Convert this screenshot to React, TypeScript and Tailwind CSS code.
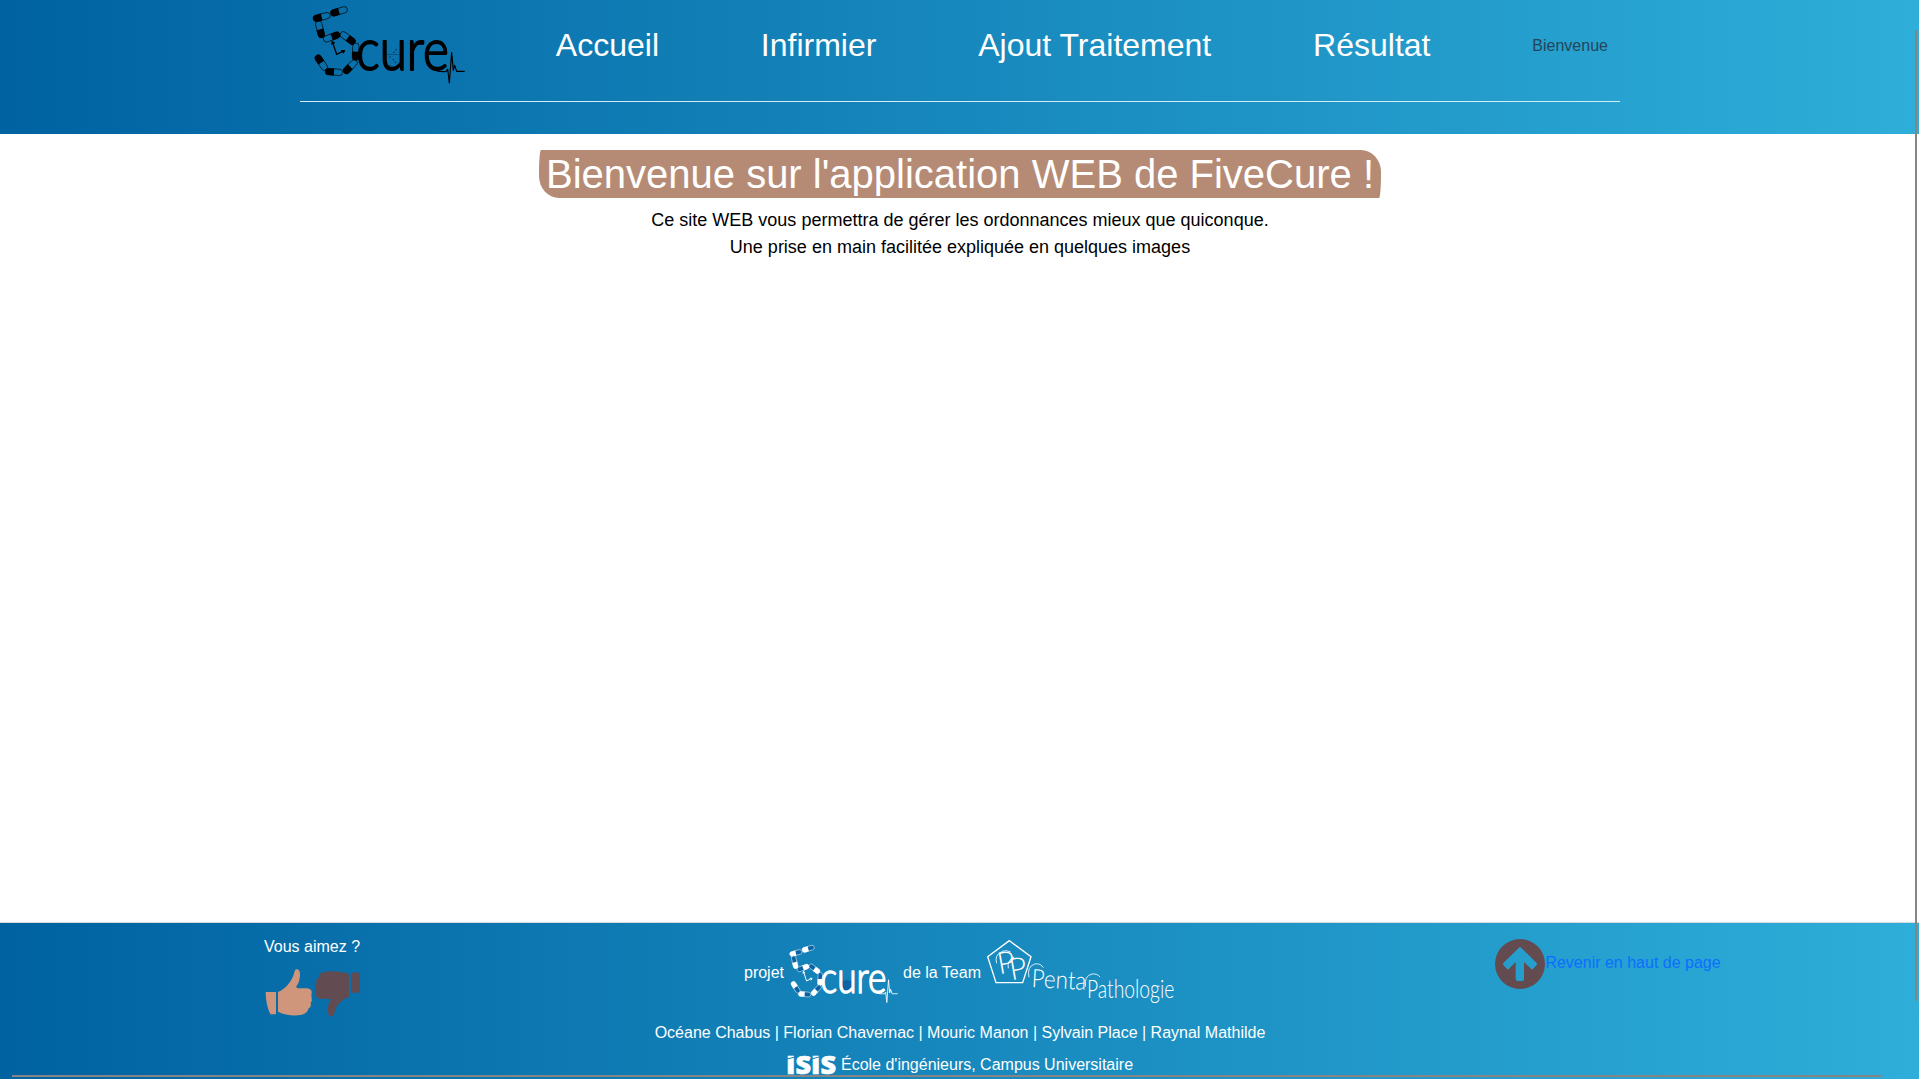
import React from "react";

type Pill = [x: number, y: number, angle: number];

// Each capsule's filled half points along its angle.
const pills: Pill[] = [
  [147, 34, 164],
  [95, 51, 166],
  [90, 88, 76],
  [125, 111, -20],
  [173, 114, 36],
  [197, 155, 92],
  [181, 200, 135],
  [132, 216, 184],
  [94, 188, 236],
];

function CureLogo({ light = false, className }: { light?: boolean; className: string }) {
  const ink = light ? "#ffffff" : "#000000";
  return (
    <svg viewBox="66 15 459 240" preserveAspectRatio="none" overflow="visible" className={className} aria-label="5cure">
      {pills.map(([x, y, a]) => (
        <g key={`${x}-${y}`} transform={`translate(${x} ${y}) rotate(${a})`}>
          <rect x="-26" y="-9.5" width="52" height="19" rx="9.5" fill={light ? "#0b62a5" : "none"} stroke={ink} strokeWidth="2" />
          <path d="M0-10.5H16A10.5 10.5 0 0 1 16 10.5H0Z" fill={ink} />
        </g>
      ))}
      <path d="M127 125L140 163L163 152M125 134L127 125L134 130M153 152L163 152L159 160" fill="none" stroke={ink} strokeWidth="4" />
      {light ? (
        <path d="M290 163Q305 157 334 163Q334 205 311 207Q290 203 290 163Z" fill="#0b62a5" />
      ) : (
        <path d="M291 164H334" stroke={ink} strokeWidth="1.5" opacity=".6" />
      )}
      <g fill={light ? "#0b62a5" : ink} opacity=".55">
        <rect x="298" y="169" width="4" height="4" />
        <rect x="308" y="177" width="4" height="4" />
        <rect x="314" y="185" width="4" height="4" />
        <rect x="310" y="155" width="4" height="4" />
        <rect x="316" y="147" width="4" height="4" />
        <rect x="298" y="195" width="4" height="3" />
      </g>
      <text
        x="199"
        y="210"
        textLength="277"
        lengthAdjust="spacingAndGlyphs"
        fill={ink}
        stroke={ink}
        strokeWidth="6"
        strokeLinejoin="round"
        fontFamily="Lato"
        fontWeight="300"
        fontSize="170"
      >
        cure
      </text>
      <path d="M430 209Q449 217 469 214L473 207L478 249L485 158L490 211L494 196L500 214H524" fill="none" stroke={ink} strokeWidth="3.5" strokeLinejoin="round" />
    </svg>
  );
}

function TeamLogo() {
  return (
    <svg viewBox="288 57 570 210" overflow="visible" className="h-[70px] w-[190px]" aria-label="PentaPathologie">
      <path d="M358 62L423 110L398 188H318L293 110Z" fill="none" stroke="white" strokeWidth="4" />
      <g fill="white" fontFamily="Lato" fontWeight="300">
        <text x="328 364" y="163 181" fontSize="90" rotate="-10">
          PP
        </text>
        <text x="424" y="201" fontSize="76" textLength="164" lengthAdjust="spacingAndGlyphs" transform="rotate(3 424 201)">
          Penta
        </text>
        <text x="591" y="235" fontSize="78" textLength="262" lengthAdjust="spacingAndGlyphs">
          Pathologie
        </text>
      </g>
      <g fill="none" stroke="white" strokeWidth="2.5">
        <path d="M320 130Q312 105 337 94Q350 89 362 96" />
        <path d="M355 145Q350 122 373 111" />
        <path d="M417 172Q410 140 434 132Q452 129 460 143" />
        <path d="M587 200Q581 168 606 162Q622 160 630 171" />
      </g>
    </svg>
  );
}

function Thumbs() {
  return (
    <svg viewBox="75 175 288 147" className="ml-[2px] h-[49px] w-24">
      <g fill="#d0967b">
        <path d="M77 247H108V314H91Q77 284 77 247Z" />
        <path d="M114 247C137 238 158 213 163 187Q165 178 171 178Q181 180 180 197Q179 218 168 232Q171 237 182 236H203Q217 239 215 251Q212 257 215 265Q217 274 212 279Q215 291 206 296Q202 313 181 316Q145 321 114 306Z" />
      </g>
      <g fill="#634b52">
        <path d="M333 189H360V249H333Z" />
        <path d="M327 192V262C307 269 287 286 283 311Q281 321 275 321Q261 317 263 298Q265 278 274 269Q266 267 256 267H238Q224 262 226 248Q231 243 227 234Q223 225 230 219Q225 210 236 204Q237 188 256 186Q290 182 327 192Z" />
      </g>
    </svg>
  );
}

function ArrowUp() {
  return (
    <svg viewBox="0 0 150 150" className="size-[50px]">
      <path
        fill="#634b50"
        fillRule="evenodd"
        d="M75 0A75 75 0 1 1 75 150A75 75 0 1 1 75 0ZM75 23L25 72Q23 75 25 78L36 90Q39 92 42 89L62 69V121Q63 126 67 126H83Q87 126 87 121V69L108 89Q111 92 114 90L125 78Q127 75 125 72Z"
      />
    </svg>
  );
}

function IsisLogo() {
  return (
    <svg viewBox="0 0 48 20" overflow="visible" className="h-5 w-12" aria-label="ISIS">
      <text
        x="-1"
        y="18.5"
        textLength="50"
        lengthAdjust="spacingAndGlyphs"
        fill="white"
        stroke="white"
        strokeWidth=".6"
        fontFamily="Open Sans"
        fontWeight="800"
        fontSize="24"
      >
        ISIS
      </text>
      <path d="M0 4L8 2M24 4L32 2" stroke="#1783b8" strokeWidth="1" />
    </svg>
  );
}

export default function App() {
  return (
    <div className="relative h-[1079px] overflow-hidden bg-white font-['Liberation_Sans',sans-serif] text-base text-black">
      <div className="flex h-full w-[1920px] flex-col">
        <header className="h-[134px] bg-linear-to-r/srgb from-[#0062a1] to-[#2eaed9]">
          <div className="mx-auto flex h-[102px] w-[1320px] items-start border-b border-[#d3edf7] px-3 pt-[5px]">
            <nav className="flex h-20 w-full items-center justify-between text-[32px] leading-[48px] text-white">
              <CureLogo className="-mr-[11px] h-20 w-[153px]" />
              <a>Accueil</a>
              <a>Infirmier</a>
              <a>Ajout Traitement</a>
              <a>Résultat</a>
              <span className="pt-[2px] text-base text-[#27455a]">Bienvenue</span>
            </nav>
          </div>
        </header>

        <main className="flex flex-1 flex-col items-center pt-4 text-center">
          <h1 className="mb-[9px] h-12 w-[842px] rounded-[2px_20px_2px_20px/24px_22px_24px_22px] bg-[#b58b75] text-[40px] leading-[48px] whitespace-nowrap text-white">
            Bienvenue sur l'application WEB de FiveCure !
          </h1>
          <p className="text-lg leading-[27px]">
            Ce site WEB vous permettra de gérer les ordonnances mieux que quiconque.
            <br />
            Une prise en main facilitée expliquée en quelques images
          </p>
        </main>

        <footer className="h-[157px] border-t border-[#d5dadd] bg-linear-to-r/srgb from-[#0062a1] to-[#2eaed9] text-white">
          <div className="-mx-3 grid grid-cols-3 pt-3 leading-6">
            <div className="flex flex-col items-center gap-[9px]">
              <span>Vous aimez ?</span>
              <Thumbs />
            </div>
            <div className="flex flex-col items-center">
              <div className="flex h-[76px] items-start gap-[5px] pt-1">
                <span className="mt-[22px]">projet</span>
                <CureLogo light className="mt-[5px] h-[60px] w-[109px]" />
                <span className="mt-[22px]">de la Team</span>
                <TeamLogo />
              </div>
              <p className="mt-[10px]">Océane Chabus | Florian Chavernac | Mouric Manon | Sylvain Place | Raynal Mathilde</p>
              <p className="mt-2 flex items-center gap-[6px]">
                <IsisLogo />
                École d'ingénieurs, Campus Universitaire
              </p>
            </div>
            <div className="flex justify-center">
              <a className="mt-1 flex h-[50px] items-center text-[#0d6efd]">
                <ArrowUp />
                <span className="-mt-[2px]">Revenir en haut de page</span>
              </a>
            </div>
          </div>
        </footer>
      </div>

      <div className="absolute top-[30px] right-[2px] h-[971px] w-[2px] bg-[#858585]" />
      <div className="absolute bottom-[2px] left-3 h-[2px] w-[1869px] bg-[#858585]" />
    </div>
  );
}
